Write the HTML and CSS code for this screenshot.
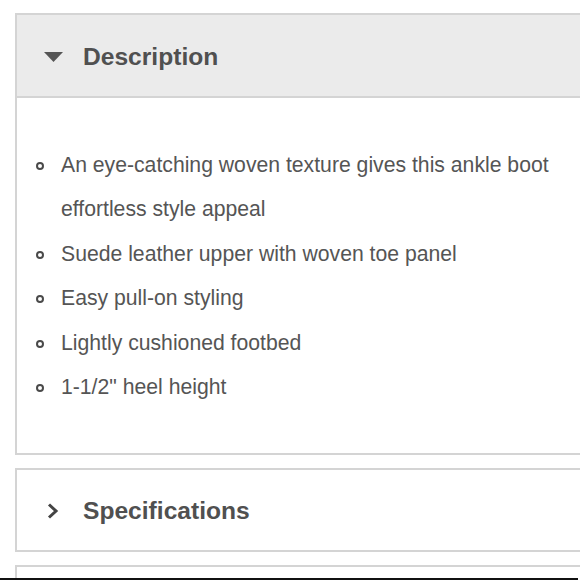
FILE: index.html
```html
<!DOCTYPE html>
<html>
<head>
<meta charset="utf-8">
<link rel="stylesheet" href="styles.css">
</head>
<body>
<div class="page">
  <section class="panel">
    <div class="panel-head open">
      <svg class="caret" width="19" height="10" viewBox="0 0 19 10"><polygon points="0,0 19,0 9.5,10" fill="#555"/></svg>
      <h2 class="title">Description</h2>
    </div>
    <div class="panel-body">
      <ul class="bullets">
        <li>An eye-catching woven texture gives this ankle boot effortless style appeal</li>
        <li>Suede leather upper with woven toe panel</li>
        <li>Easy pull-on styling</li>
        <li>Lightly cushioned footbed</li>
        <li>1-1/2" heel height</li>
      </ul>
    </div>
  </section>
  <section class="panel">
    <div class="panel-head">
      <svg class="chev" width="19" height="16" viewBox="0 0 19 16"><polyline points="5,1.5 12,8 5,14.5" fill="none" stroke="#444" stroke-width="3"/></svg>
      <h2 class="title">Specifications</h2>
    </div>
  </section>
  <section class="panel last"></section>
</div>
<div class="bottom-bar"></div>
</body>
</html>
```
FILE: styles.css
```css
html, body {
  margin: 0;
  padding: 0;
  background: #fff;
  overflow: hidden;
}
body {
  width: 580px;
  height: 580px;
  font-family: "Liberation Sans", Arial, sans-serif;
}
.page {
  padding: 13px 0 0 15px;
  display: flex;
  flex-direction: column;
  gap: 13px;
}
.panel {
  width: 600px;
  border: 2px solid #d4d4d4;
  border-right: none;
  background: #fff;
}
.panel-head {
  box-sizing: border-box;
  height: 80px;
  display: flex;
  align-items: center;
  padding: 2px 0 0 27px;
  background: #fff;
}
.panel-head.open {
  height: 83px;
  background: #ebebeb;
  border-bottom: 2px solid #d4d4d4;
}
.caret {
  display: block;
  margin-right: 20px;
}
.chev {
  display: block;
  margin-right: 20px;
  margin-left: 0;
}
.title {
  margin: 0;
  font-size: 24.6px;
  font-weight: bold;
  color: #505050;
}
.panel-body {
  padding: 45px 0 44px 0;
}
.bullets {
  width: 517px;
  margin: 0;
  padding: 0 0 0 44px;
  list-style: none;
  font-size: 21.2px;
  line-height: 44.4px;
  color: #555;
}
.bullets li {
  position: relative;
}
.bullets li::before {
  content: "";
  position: absolute;
  left: -25px;
  top: 19px;
  width: 4px;
  height: 4px;
  border: 2px solid #4a4a4a;
  border-radius: 50%;
}
.panel.last {
  height: 40px;
}
.bottom-bar {
  position: fixed;
  left: 0;
  bottom: 0;
  width: 578px;
  height: 2px;
  background: #111;
}
```
